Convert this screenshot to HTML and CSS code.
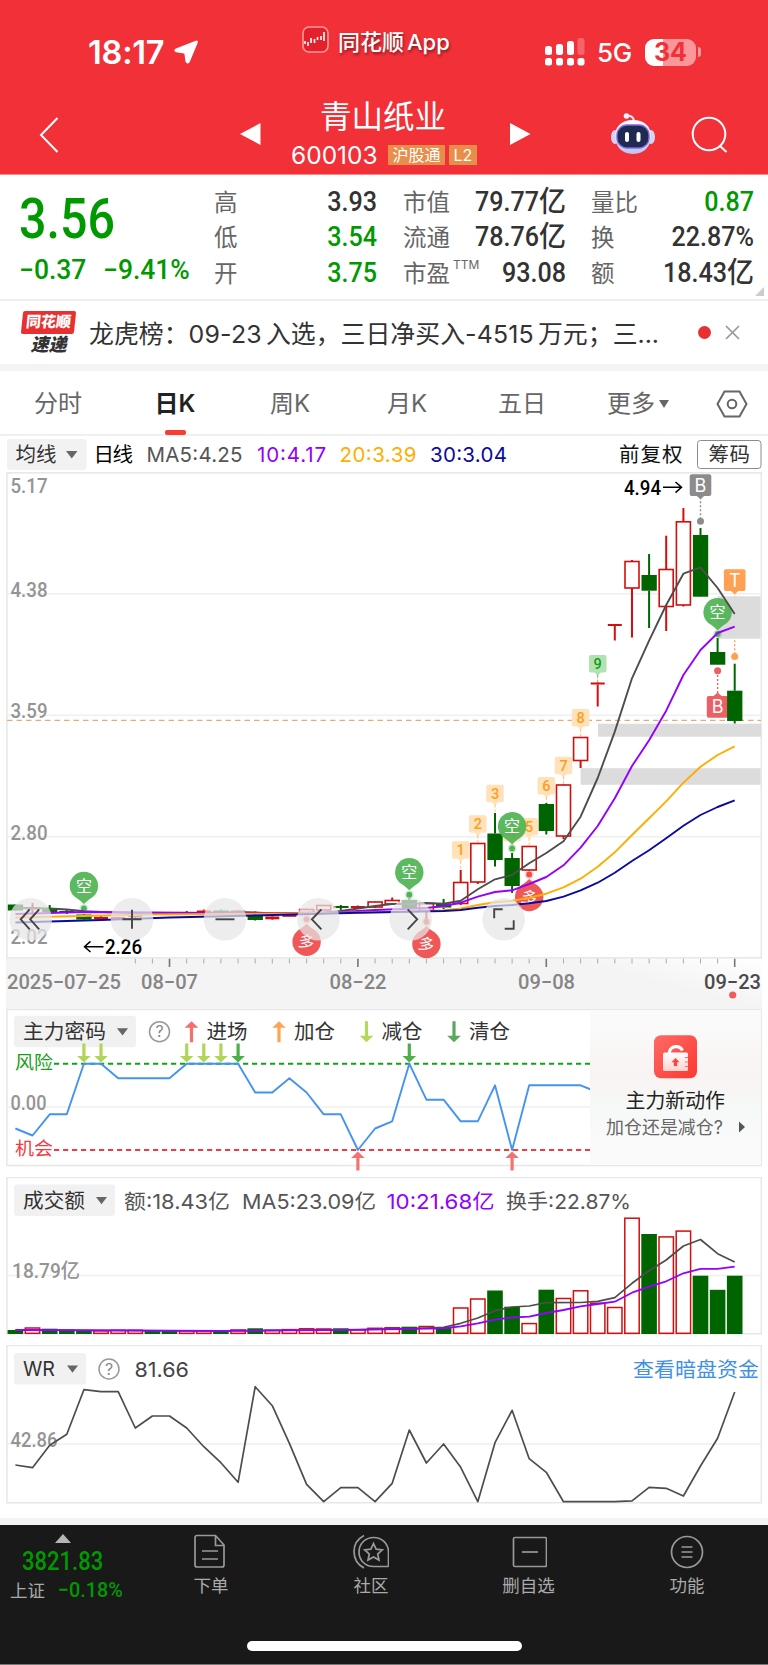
FILE: index.html
```html
<!DOCTYPE html>
<html lang="zh-CN">
<head>
    <meta charset="UTF-8">
    <meta name="viewport" content="width=device-width, initial-scale=1.0">
    <title>青山纸业 600103</title>
    <link rel="stylesheet" href="styles.css">
</head>
<body>
    <header class="header">
        <div class="status">
            <div class="status-left">
                <span class="clock">18:17</span>
                <svg width="26" height="26" viewBox="0 0 26 26"><path d="M23 2.500 Q24.500 1.500 24 3.400 L16 22.600 Q14.600 25 13.200 22.400 L12.200 14.800 Q12 13.800 11 13.700 L3.300 12.600 Q1 11.400 3.200 10.200 Z" fill="#fff" stroke="#fff" stroke-width="1.500" stroke-linejoin="round"/></svg>
            </div>
            <div class="status-app">
                <svg width="27" height="27" viewBox="0 0 27 27">
                    <rect x="1" y="1" width="25" height="25" rx="6" fill="#e3202c" stroke="#ff9a9d" stroke-width="1.600"/>
                    <path d="M3 15v3M6 16v4M9 12v5M12.500 13v4M15.500 11v3M19 10v4M22 6v9" stroke="#fff" stroke-width="1.600"/>
                </svg>
                <span>同花顺<i>App</i></span>
            </div>
            <div class="status-right">
                <svg width="40" height="28" viewBox="0 0 40 28" fill="#fff">
                    <rect x="0" y="8" width="7" height="9" rx="2.500"/><rect x="11" y="6" width="7" height="11" rx="2.500"/><rect x="22" y="3" width="7" height="14" rx="2.500"/><rect x="32.500" y="0" width="7" height="17" rx="2.500" opacity=".25"/>
                    <rect x="0" y="20" width="7" height="7.500" rx="2.500"/><rect x="11" y="20" width="7" height="7.500" rx="2.500"/><rect x="22" y="20" width="7" height="7.500" rx="2.500"/><rect x="32.500" y="20" width="7" height="7.500" rx="2.500"/>
                </svg>
                <span class="net">5G</span>
                <span class="battery">34</span>
                <span class="battery-cap"></span>
            </div>
        </div>
        <div class="titlebar">
            <svg class="back" width="20" height="36" viewBox="0 0 20 36"><path d="M18.500 1 2 18l16.500 17" fill="none" stroke="#fff" stroke-width="2"/></svg>
            <svg class="prev" width="21" height="22" viewBox="0 0 21 22"><path d="M20.500 0v22L0 11z" fill="#fff"/></svg>
            <div class="stock">
                <div class="stock-name">青山纸业</div>
                <div class="stock-code"><span class="code">600103</span><span class="tag">沪股通</span><span class="tag">L2</span></div>
            </div>
            <svg class="next" width="21" height="22" viewBox="0 0 21 22"><path d="M0 0v22L20.500 11z" fill="#fff"/></svg>
            <svg class="robot" width="44" height="42" viewBox="0 0 44 42">
                <defs>
                    <linearGradient id="shell" x1="0" y1="0" x2="0" y2="1"><stop offset="0" stop-color="#fff"/><stop offset="1" stop-color="#bfc4ee"/></linearGradient>
                </defs>
                <path d="M15 3q7-1 8 5" fill="none" stroke="#e6e6fa" stroke-width="2"/>
                <circle cx="15.500" cy="3" r="2.800" fill="#f4f2ff"/>
                <ellipse cx="4" cy="24" rx="4" ry="7" fill="#d5d3f3"/><ellipse cx="40" cy="24" rx="4" ry="7" fill="#d5d3f3"/>
                <path d="M22 7c12 0 18 7 18 16s-6 18-18 18S4 32 4 23 10 7 22 7z" fill="url(#shell)"/>
                <rect x="6" y="12" width="32" height="23" rx="10" fill="#1e2a52" stroke="#7f68df" stroke-width="1.300"/>
                <rect x="14" y="19" width="4" height="10" rx="2" fill="#fff"/><rect x="25.500" y="19" width="4" height="10" rx="2" fill="#fff"/>
            </svg>
            <svg class="search" width="38" height="38" viewBox="0 0 38 38" fill="none" stroke="#fff" stroke-width="2"><circle cx="18" cy="18" r="16.300"/><path d="M28.500 29.500 35.500 36"/></svg>
        </div>
    </header>

    <section class="quote">
        <div class="price">
            <div class="price-now"><span class="din">3.56</span></div>
            <div class="price-change"><span class="din">−0.37</span><span class="din pct">−9.41%</span></div>
        </div>
        <dl class="facts facts-a">
            <dt>高</dt><dd>3.93</dd>
            <dt>低</dt><dd class="down">3.54</dd>
            <dt>开</dt><dd class="down">3.75</dd>
        </dl>
        <dl class="facts facts-b">
            <dt>市值</dt><dd>79.77<i>亿</i></dd>
            <dt>流通</dt><dd>78.76<i>亿</i></dd>
            <dt>市盈<sup>TTM</sup></dt><dd>93.08</dd>
        </dl>
        <dl class="facts facts-c">
            <dt>量比</dt><dd class="down">0.87</dd>
            <dt>换</dt><dd>22.87%</dd>
            <dt>额</dt><dd>18.43<i>亿</i></dd>
        </dl>
        <span class="corner"></span>
    </section>

    <section class="news">
        <div class="news-logo"><b>同花顺</b><em>速递</em></div>
        <p>龙虎榜：<span>09-23</span>入选，三日净买入<span>-4515</span>万元；三...</p>
        <i class="dot"></i>
        <svg width="15" height="15" viewBox="0 0 15 15"><path d="M1 1l13 13M14 1 1 14" stroke="#999" stroke-width="1.700"/></svg>
    </section>

    <nav class="tabs">
        <a>分时</a>
        <a class="active">日K</a>
        <a>周K</a>
        <a>月K</a>
        <a>五日</a>
        <a class="more">更多<i></i></a>
        <svg width="32" height="28" viewBox="0 0 32 28" fill="none" stroke="#666" stroke-width="2"><path d="M8.500 1.500h15L30.500 14l-7 12.500h-15L1.500 14z"/><circle cx="16" cy="14" r="4.300"/></svg>
    </nav>

    <section class="tools">
        <svg width="768" height="36" viewBox="0 436 768 36">
            <rect x="7" y="439" width="79.500" height="31" rx="3" fill="#f2f2f2"/>
            <g class="lg">
                <text x="15.500" y="462" textLength="41" fill="#333">均线</text>
                <path d="M66 451h11.500l-5.750 7.500z" fill="#666"/>
                <text x="93.500" y="462" textLength="39.500" fill="#000">日线</text>
                <text x="146.500" y="461.500" textLength="96" fill="#555">MA5:4.25</text>
                <text x="257" y="461.500" textLength="69" fill="#9400ff">10:4.17</text>
                <text x="339.500" y="461.500" textLength="77" fill="#ffae00">20:3.39</text>
                <text x="430" y="461.500" textLength="77" fill="#0a0aa0">30:3.04</text>
                <text x="619" y="462" textLength="63.500" fill="#111">前复权</text>
                <rect x="697.500" y="440.500" width="63.500" height="28" rx="3" fill="#fff" stroke="#8c8c8c"/>
                <text x="708.500" y="462" textLength="41.500" fill="#333">筹码</text>
            </g>
        </svg>
    </section>

    <main class="charts">
        <svg id="kline" width="768" height="537" viewBox="0 472 768 537"></svg>
        <svg id="signal" width="768" height="168" viewBox="0 1009 768 168"></svg>
        <svg id="volume" width="768" height="168" viewBox="0 1177 768 168"></svg>
        <svg id="wr" width="768" height="173" viewBox="0 1345 768 173"></svg>
    </main>

    <footer class="bottom">
        <div class="bottom-row">
            <div class="index">
                <i></i>
                <div class="index-value"><span class="din">3821.83</span></div>
                <div class="index-sub"><span>上证</span><span class="din">−0.18%</span></div>
            </div>
            <a class="item"><svg width="36" height="36" viewBox="0 0 36 36"><path d="M4 2.500h18.500l8.500 9.500v20a2 2 0 0 1-2 2h-25a2 2 0 0 1-2-2v-27.500a2 2 0 0 1 2-2zM22.500 3v9.500H31M9 18h16M9 26h16"/></svg>下单</a>
            <a class="item"><svg width="36" height="36" viewBox="0 0 36 36"><path d="M20.500 4.500c8.500 0 15 6 15 14.500v13.500a1 1 0 0 1-1 1H20.500C12 33.500 6 27 6 19S12 4.500 20.500 4.500zM11 2.500C4.500 6 1 12 1 18.500S4.500 31.500 11 35M20.500 10.500l2.600 5.600 6.200.7-4.600 4.200 1.300 6.100-5.500-3.100-5.500 3.100 1.300-6.100-4.600-4.200 6.200-.7z"/></svg>社区</a>
            <a class="item"><svg width="36" height="36" viewBox="0 0 36 36"><rect x="2.500" y="4.500" width="33" height="29" rx="1.500"/><path d="M11 19h16"/></svg>删自选</a>
            <a class="item"><svg width="36" height="36" viewBox="0 0 36 36"><circle cx="18" cy="19" r="15.500"/><path d="M12.500 14h11M12.500 19h11M12.500 24h11"/></svg>功能</a>
        </div>
        <div class="home-bar"></div>
    </footer>

    <script src="charts.js"></script>
</body>
</html>
```
FILE: styles.css
```css
* {
    box-sizing: border-box;
}

body {
    margin: 0;
    width: 768px;
    background: #fff;
    color: #333;
    font-family: Inter, 'Noto Sans CJK SC', sans-serif;
}

svg {
    display: block;
    flex: none;
}

.din {
    display: inline-block;
    font-family: Roboto, 'Noto Sans CJK SC', sans-serif;
    font-weight: 500;
    transform: scaleX(.88);
    transform-origin: left center;
}

.header {
    height: 175px;
    background: #f23038;
    color: #fff;
    border-bottom: 1px solid #f8898d;
}

.status {
    display: grid;
    grid-template-columns: 302px 1fr 223px;
    height: 84px;
}

.status-left {
    display: flex;
    align-items: center;
    gap: 8px;
    padding: 20px 0 0 88px;
}

.clock {
    width: 77px;
    font-size: 32.500px;
    font-weight: 600;
    letter-spacing: -.2px;
    white-space: nowrap;
}

.status-app {
    display: flex;
    align-items: center;
    gap: 9px;
    height: 79px;
    font-size: 22px;
    font-weight: 500;
    text-shadow: 1px 2px 3px rgba(0, 0, 0, .45);
}

.status-app i {
    font-style: normal;
    margin-left: 3px;
}

.status-right {
    display: flex;
    align-items: center;
    padding-top: 20px;
}

.net {
    width: 48px;
    padding-left: 12px;
    font-size: 26px;
    font-weight: 500;
    letter-spacing: -.2px;
}

.battery {
    width: 51px;
    height: 27px;
    margin-left: 12px;
    border-radius: 9px;
    background: linear-gradient(90deg, #fff 35%, #f9979b 35%);
    color: #f23038;
    font-size: 25px;
    font-weight: 700;
    line-height: 27px;
    text-align: center;
}

.battery-cap {
    width: 3px;
    height: 10px;
    margin-left: 2px;
    border-radius: 0 4px 4px 0;
    background: #f9979b;
}

.titlebar {
    display: flex;
    height: 89px;
}

.back {
    margin: 33px 0 0 39px;
}

.prev {
    margin: 39px 0 0 181px;
}

.stock {
    width: 250px;
    text-align: center;
}

.stock-name {
    height: 55px;
    padding: 10px 6px 0 0;
    font-size: 31.500px;
    line-height: 46px;
}

.stock-code {
    display: flex;
    align-items: center;
    margin-left: 30px;
    height: 32px;
}

.code {
    width: 97px;
    font-size: 24.500px;
    text-align: left;
}

.tag {
    height: 20px;
    margin-right: 4px;
    padding: 0 4.500px;
    background: #e68e4a;
    font-size: 16px;
    line-height: 20px;
}

.next {
    margin: 39px 0 0 -1px;
}

.robot {
    margin: 29px 0 0 80px;
}

.search {
    margin: 32px 0 0 36px;
}

.quote {
    position: relative;
    display: flex;
    height: 126px;
    border-bottom: 2px solid #efefef;
}

.price {
    width: 214px;
    padding-left: 19px;
    color: #090;
    white-space: nowrap;
}

.price-now {
    margin-top: 10px;
    font-size: 55px;
    line-height: 66px;
}

.price-change {
    margin-top: 2px;
    font-size: 27px;
    line-height: 32px;
}

.price-change .din {
    transform: scaleX(.98);
}

.pct {
    margin-left: 15px;
}

.facts {
    display: grid;
    grid-template-columns: 50px 1fr;
    grid-auto-rows: 35.500px;
    align-items: center;
    margin: 0;
    padding-top: 9px;
    height: 118px;
    font-size: 23.500px;
}

.facts-a {
    width: 163px;
}

.facts-b {
    width: 163px;
    margin-left: 26px;
}

.facts-c {
    width: 163px;
    margin-left: 25px;
}

.facts dt {
    padding-bottom: 2px;
    color: #666;
    white-space: nowrap;
}

.facts dd {
    display: flex;
    justify-content: flex-end;
    align-items: center;
    margin: 0;
    font-family: Roboto, 'Noto Sans CJK SC', sans-serif;
    font-size: 27px;
    font-weight: 500;
    line-height: 32px;
    white-space: nowrap;
    transform: scaleX(.93);
    transform-origin: right center;
}

.facts dd i {
    font-size: 29px;
    font-style: normal;
}

.facts sup {
    margin-left: 3px;
    font-size: 12px;
    line-height: 0;
    vertical-align: 13px;
}

.facts .down {
    color: #090;
}

.corner {
    position: absolute;
    right: 4px;
    bottom: 3px;
    border-left: 9px solid transparent;
    border-bottom: 9px solid #ccc;
}

.news {
    display: flex;
    align-items: center;
    height: 70px;
    padding: 0 28px 0 22px;
    border-bottom: 7px solid #f4f4f4;
}

.news-logo {
    width: 53px;
    height: 44px;
    text-align: center;
    font-weight: 900;
}

.news-logo b {
    display: block;
    height: 23px;
    border-radius: 2px;
    background: #e93030;
    color: #fff;
    font-size: 15px;
    line-height: 22px;
    transform: skewX(-6deg);
}

.news-logo em {
    display: block;
    font-size: 18px;
    line-height: 21px;
}

.news p {
    width: 569px;
    margin: 0 40px 2px 14px;
    font-size: 24.900px;
    white-space: nowrap;
}

.news span {
    margin-right: 4px;
    letter-spacing: .2px;
}

.dot {
    flex: none;
    width: 13px;
    height: 13px;
    margin-right: 14px;
    border-radius: 50%;
    background: #e93030;
}

.tabs {
    display: grid;
    grid-template-columns: 116px 118px 112px 122px 108px 124px 68px;
    align-items: center;
    height: 65px;
    border-bottom: 2px solid #f0f0f0;
    color: #666;
    font-size: 24px;
    text-align: center;
}

.tabs a {
    height: 65px;
    line-height: 66px;
}

.tabs .active {
    color: #222;
    font-weight: 600;
}

.tabs .active::after {
    content: '';
    display: block;
    width: 21px;
    height: 5px;
    margin: -7px auto 0;
    border-radius: 2px;
    background: #fb3b30;
}

.more i {
    display: inline-block;
    margin: 0 0 4px 4px;
    border: 5.500px solid transparent;
    border-top: 8px solid #666;
    border-bottom: 0;
}

.tabs svg {
    margin-left: 16px;
}

/* chart text */
.lg {
    font-size: 20.500px;
}

.num {
    font-family: Roboto, 'Noto Sans CJK SC', sans-serif;
    font-size: 20px;
}

.bottom {
    height: 147px;
    border-top: 7px solid #f3f3f3;
    border-bottom: 1px solid #777;
    background: #191919;
    color: #aaa;
}

.bottom-row {
    display: grid;
    grid-template-columns: 133px 156px 164px 151px 166px;
    height: 116px;
}

.index {
    padding: 9px 0 0 10px;
    font-size: 17.500px;
}

.index i {
    display: block;
    width: 0;
    margin-left: 45px;
    border: 8px solid transparent;
    border-bottom: 9px solid #b5b5b5;
    border-top: 0;
}

.index .din {
    color: #090;
}

.index-value {
    margin-left: 12px;
    font-size: 25px;
    line-height: 36px;
}

.index-sub {
    display: flex;
    gap: 13px;
    align-items: center;
    height: 19px;
    white-space: nowrap;
}

.index-sub .din {
    font-size: 21px;
    transform: scaleX(.94);
}

.item {
    display: flex;
    flex-direction: column;
    align-items: center;
    padding-top: 8px;
    font-size: 17.500px;
    line-height: 34px;
}

.item svg {
    fill: none;
    stroke: #999;
    stroke-width: 1.700;
}

.home-bar {
    width: 275px;
    height: 10px;
    margin-left: 246.500px;
    border-radius: 5px;
    background: #fff;
}
```
FILE: charts.js
```js
const RED = '#d40d0d', GREEN = '#006400', GREY = '#4d4d4d', PURPLE = '#9400ff';
const px = k => +(15.4 + 17.127 * k).toFixed(1);

// helpers, each one returns an svg string
const line = (x1, y1, x2, y2, c, w = 2, extra = '') =>
    `<path d="M${x1} ${y1}L${x2} ${y2}" stroke="${c}" stroke-width="${w}" fill="none" ${extra}/>`;
const text = (x, y, s, c, len, extra = '') =>
    `<text x="${x}" y="${y}" fill="${c}" ${len ? `textLength="${len}" lengthAdjust="spacingAndGlyphs"` : ''} ${extra}>${s}</text>`;
const poly = (pts, c, w = 1.9) =>
    `<polyline points="${pts.map(p => px(p[0]) + ',' + p[1]).join(' ')}" fill="none" stroke="${c}" stroke-width="${w}" stroke-linejoin="round"/>`;
const series = (ys, from = 0) => ys.map((y, i) => [i + from, y]);
const frame = (y, h) => `<rect x="6.900" y="${y}" width="754.400" height="${h}" fill="#fff" stroke="#e8e8e8" stroke-width="1.600"/>`;
const grid = (y, x2 = 761) => line(7, y, x2, y, '#efefef', 1.5);

// ---------- K line ----------
// [top, bottom, high, low, up]
const candles = [
    [904.5, 910.5, 904, 911, 0], [907.5, 909.5, 903, 915, 1], [908, 912, 905, 912, 0], [911, 912.5, 909, 914, 0],
    [914.5, 919.5, 914, 920, 0], [917, 919, 915.5, 919, 1], [917, 919.5, 917, 920, 1], [915, 917, 914, 918, 1],
    [912, 913.3, 912, 914, 0], [912, 913.5, 912, 914, 0], [912, 913.8, 911, 914, 1], [910.5, 912.8, 909.5, 914, 1],
    [910.5, 912.5, 909.5, 914, 0], [910.5, 912.5, 910, 914, 1], [915, 920, 911.5, 920.5, 0], [916.5, 919.3, 914, 920, 1],
    [915, 916.8, 912, 917, 1], [909.5, 912.5, 908.5, 914, 1], [905.5, 910, 905, 910, 1], [906, 908, 905, 910, 0],
    [906, 908, 905.5, 909, 1], [902, 907, 901.5, 908, 1], [900.5, 904, 897.5, 904, 1], [900, 909, 898, 909, 0],
    [903.5, 910.5, 903, 922, 1], [903.5, 907.5, 899, 909, 0], [882.5, 903.5, 870, 905, 1], [843.5, 882, 843, 884, 1],
    [833.5, 860, 813, 866.5, 0], [858, 886, 853, 893, 0], [846.5, 870, 846, 871, 1], [804, 831, 803, 834.5, 0],
    [785, 836, 784.5, 839, 1], [737.5, 760.5, 737, 768, 1], [682.5, 684.5, 682, 706.5, 1], [624, 626, 624, 640.5, 1],
    [561.5, 588, 560, 637.5, 1], [575, 590.7, 554, 628, 0], [569.5, 606.5, 535.7, 631, 1], [521.8, 605, 508, 606.5, 1],
    [535, 596.7, 528, 597, 0], [652, 664.7, 638, 665, 0], [690.7, 721, 663.7, 723.5, 0]
];

function candle(c, k) {
    const x = px(k), [t, b, hi, lo, up] = c;
    const col = up ? RED : GREEN;
    let s = line(x, hi, x, t, col) + line(x, b, x, lo, col);
    if (!up) return s + `<rect x="${x - 7.6}" y="${t}" width="15.300" height="${b - t}" fill="${col}"/>`;
    if (b - t < 2.9) return s + `<rect x="${x - 7}" y="${t}" width="14" height="${b - t}" fill="${col}"/>`;
    return s + `<rect x="${x - 7}" y="${t}" width="14" height="${b - t}" fill="#fff" stroke="${col}" stroke-width="1.600"/>`;
}

function pin(k, cy, dotY, word, col) {
    const x = px(k), d = dotY > cy ? 1 : -1;
    return `<g opacity=".93"><circle cx="${x}" cy="${cy}" r="14.200" fill="${col}"/>
        <path d="M${x - 8} ${cy + d * 11}L${x} ${cy + d * 18}L${x + 8} ${cy + d * 11}z" fill="${col}"/></g>
        <circle cx="${x}" cy="${dotY}" r="4.500" fill="${col}" opacity=".25"/><circle cx="${x}" cy="${dotY}" r="2.900" fill="${col}"/>` +
        text(x, cy + 6, word, '#fff', 0, `font-size="16" text-anchor="middle" ${d < 0 ? `transform="rotate(14 ${x} ${cy})"` : ''}`);
}

function count(n, k, y, stemTo) {
    const x = px(k), bg = n === 9 ? '#b4e1b4' : '#ffe2ba', fg = n === 9 ? '#0f9d0f' : '#ff9d1e';
    return `<rect x="${x - 8.8}" y="${y}" width="17.600" height="17.500" rx="2" fill="${bg}"/>
        <path d="M${x - 3.5} ${y + 17}h7l-3.500 4z" fill="${bg}"/>` +
        line(x, y + 20, x, stemTo, fg, 1, 'stroke-dasharray="3 1.500" opacity=".6"') +
        text(x, y + 13.8, n, fg, 0, 'class="num" style="font-size:14.500px" font-weight="500" text-anchor="middle"');
}

function flag(letter, k, y, col, dotY) {
    const x = px(k), up = dotY < y;
    return line(x, up ? y - 3 : y + 23, x, dotY, col, 1.4, 'stroke-dasharray="2 2"') +
        `<rect x="${x - 10.8}" y="${y}" width="21.600" height="21.800" rx="2" fill="${col}"/>
        <path d="M${x - 4} ${up ? y : y + 21.5}h8l-4 ${up ? -3.5 : 3.5}z" fill="${col}"/>
        <circle cx="${x}" cy="${dotY}" r="3.500" fill="${col}"/>` +
        text(x, y + 17.3, letter, '#fff', 0, 'font-size="18" text-anchor="middle"');
}

const ma5 = series([908, 908, 908.5, 909.5, 911.3, 912, 912.5, 913, 914, 914, 913.5, 913, 912.5, 912, 912.5, 913.5, 914, 914, 913, 911,
    908.5, 906, 904, 904, 903, 903.7, 900.7, 889.3, 879.3, 875, 863.3, 853, 841.3, 816.7, 778, 731.6, 678.3, 640.7, 605, 573.7, 567.3, 588, 614]);
const ma10 = [[0, 914], [4, 912], [12, 913], [17, 913], [19, 912], [21, 910], [23, 908.7], [24, 908], [25, 906], [26, 902.7], [27, 896.7], [28, 892],
    [29, 890.3], [30, 884], [31, 877], [32, 865.3], [33, 847.7], [34, 826], [35, 798.3], [36, 766], [37, 740.3], [38, 710.7], [39, 675], [40, 650], [41, 633], [42, 626.7]];
const ma20 = [[0, 917.5], [8, 914.5], [16, 913.5], [22, 912], [25, 910.3], [26, 908.5], [27, 905], [28, 902.3], [29, 900.7], [30, 897.7], [31, 893.7],
    [32, 887.3], [33, 878.7], [34, 866.7], [35, 852.3], [36, 835], [37, 818.3], [38, 801.3], [39, 782.7], [40, 766.7], [41, 755], [42, 746.3]];
const ma30 = [[0, 922.5], [5, 920], [9, 917.5], [14, 915.5], [20, 912.8], [23, 911.8], [25, 911], [26, 910], [27, 907.7], [28, 906], [29, 905], [30, 903.3],
    [31, 901], [32, 896.7], [33, 890.3], [34, 882.7], [35, 872.7], [36, 861], [37, 850.3], [38, 838.3], [39, 825.7], [40, 815], [41, 807], [42, 800.3]];

function drawKline() {
    let s = `<defs>
        <linearGradient id="axisFade" x1="0" y1="1" x2="1" y2="0"><stop offset=".5" stop-color="#f4f4f4"/><stop offset="1" stop-color="#fff"/></linearGradient>
        </defs>
        <rect x="6" y="958" width="756" height="51" fill="#f4f4f4"/><rect x="562" y="958" width="200" height="51" fill="url(#axisFade)"/>`;
    s += frame(472.8, 485);
    [593.7, 715.3, 836.7].forEach(y => s += grid(y));
    s += '<g fill="#dcdcdc"><rect x="598" y="723.700" width="163" height="13"/><rect x="580.600" y="768.200" width="180" height="16.600"/></g>';
    s += line(7, 720.4, 761, 720.4, '#dfae74', 1.2, 'stroke-dasharray="5.500 4"');

    [['5.17', 492.8], ['4.38', 596.5], ['3.59', 718], ['2.80', 839.5], ['2.02', 943.5]].forEach(l =>
        s += text(10.5, l[1], l[0], '#949494', 37, 'class="num" font-weight="500"'));

    s += count(1, 26, 841.3, 870) + count(2, 27, 815.3, 843) + count(3, 28, 784.7, 813) + count(4, 29, 824, 853) + count(5, 30, 818, 846) +
        count(6, 31, 777, 803) + count(7, 32, 756.7, 784) + count(8, 33, 709, 737) + count(9, 34, 655, 682);
    s += flag('B', 40, 474.2, '#8c8c8c', 521.3) + flag('B', 41, 696, '#ee5f63', 670.8) + flag('T', 42, 569.2, '#ffa052', 656.5);
    // gap zone hides the middle of the T flag's stem
    s += '<rect x="717.600" y="596.300" width="43" height="42.400" fill="#dcdcdc"/>';
    s += candles.map(candle).join('');
    s += pin(4, 886, 908.5, '空', '#50b454') + pin(23, 872.3, 894.7, '空', '#50b454') + pin(29, 826.3, 848.5, '空', '#50b454') + pin(41, 612.3, 634, '空', '#50b454');
    s += pin(17, 941.7, 919.3, '多', '#ef4b4b') + pin(24, 944, 921.7, '多', '#ef4b4b') + pin(30, 897, 874.5, '多', '#ef4b4b');
    s += poly(ma5, GREY) + poly(ma10, PURPLE) + poly(ma20, '#ffae00') + poly(ma30, '#0a0aa0');

    s += text(624, 494.5, '4.94', '#000', 37, 'class="num" font-weight="500"') + '<path d="M663 487.300h18M675.500 482l6 5.300-6 5.300" fill="none" stroke="#000" stroke-width="1.500"/>';
    s += text(105, 954, '2.26', '#000', 37, 'class="num" font-weight="500"') + '<path d="M103.500 946.700h-18M90.500 941.400l-6 5.300 6 5.300" fill="none" stroke="#000" stroke-width="1.500"/>';

    // floating chart controls
    const icons = [
        [30.7, 'M-1 -10L-10 0L-1 10M8.500 -10L-.5 0L8.500 10'],
        [132, 'M-9.500 0H9.500M0 -9.500V9.500'],
        [225, 'M-9.500 0H9.500'],
        [318.4, 'M3 -10L-6.500 0L3 10'],
        [410.7, 'M-3 -10L6.500 0L-3 10'],
        [503.7, 'M-9.500 -1V-10H-1M10 1V9.500H1']
    ];
    icons.forEach(([x, d]) => s += `<g transform="translate(${x} 919.300)"><circle r="21.300" fill="#e6e6e6" opacity=".72"/><path d="${d}" fill="none" stroke="#444" stroke-width="1.900"/></g>`);

    for (let k = 7; k < 43; k++) {
        const big = (k - 9) % 11 === 0;
        s += line(px(k), 958.7, px(k), big ? 967 : 963.5, big ? '#777' : '#aaa', big ? 1.6 : 1);
    }
    s += text(7, 989, '2025−07−25', '#858585', 114, 'class="num" font-weight="500"');
    [['08−07', 141, '#858585'], ['08−22', 329.5, '#858585'], ['09−08', 518, '#858585'], ['09−23', 704, '#4a4a4a']].forEach(d =>
        s += text(d[1], 989, d[0], d[2], 57, 'class="num" font-weight="500"'));
    s += '<circle cx="732.700" cy="995" r="3.600" fill="#f25b5b"/>';
    document.getElementById('kline').innerHTML = s;
}

const chip = (y, w, label, len) => `<rect x="14" y="${y}" width="${w}" height="31.500" rx="3" fill="#f1f1f1"/>` +
    text(23, y + 23, label, '#333', len) + `<path d="M${w - 5} ${y + 12.500}h11l-5.500 7.300z" fill="#666"/>`;
const help = (x, y) => `<circle cx="${x}" cy="${y}" r="10" fill="none" stroke="#999" stroke-width="1.500"/>` +
    text(x, y + 5.7, '?', '#888', 0, 'font-size="16" text-anchor="middle"');
const arrow = (x, y, h, col, up) => up
    ? `<path d="M${x - 6.8} ${y + 6.5}L${x} ${y}l6.800 6.500h-5.200v${h - 6.5}h-3.200v-${h - 6.5}z" fill="${col}"/>`
    : `<path d="M${x - 6.8} ${y + h - 6.5}L${x} ${y + h}l6.800 -6.500h-5.200v-${h - 6.5}h-3.200v${h - 6.5}z" fill="${col}"/>`;

// ---------- main force signal ----------
function drawSignal() {
    const hi = 1063.7, lo = 1150, a = 1078.3, b = 1114.3, c = 1092.5, d = 1121.3, e = 1085.3;
    const pts = series([1128.5, 1135.5, b, b, hi, hi, a, a, a, a, hi, hi, hi, hi, c, c, a, c, b, b, lo, 1128.5, d, hi, 1099.7, 1099.7, d, d, e, lo, e, e, e, e]);
    pts.push([33.6, 1089.5]);
    let s = frame(1009.5, 156) + grid(1107, 590) + '<g class="lg">' + chip(1015.7, 122, '主力密码', 83);
    s += help(159.5, 1031.7);
    [[191.5, '#f56e6c', 1, '进场'], [279, '#ffa452', 1, '加仓'], [366.5, '#b4d85c', 0, '减仓'], [454, '#5aa860', 0, '清仓']].forEach(l =>
        s += arrow(l[0], 1021.3, 21, l[1], l[2]) + text(l[0] + 15, 1038.7, l[3], '#333', 41));
    s += '</g>';
    s += line(54, hi, 590, hi, '#16a016', 2, 'stroke-dasharray="5.200 3.800"') + line(54, lo, 590, lo, '#f23a40', 2, 'stroke-dasharray="5.200 3.800"');
    s += text(15, 1068.5, '风险', '#16a016', 38, 'font-size="18.500"') + text(15, 1154.500, '机会', '#f23a40', 38, 'font-size="18.500"');
    s += text(10.5, 1109.7, '0.00', '#949494', 36, 'class="num" font-weight="500"');
    s += poly(pts, '#4593f0');
    [4, 5, 10, 11, 12].forEach(k => s += arrow(px(k), 1043.5, 19, '#b1d657', 0));
    [13, 23].forEach(k => s += arrow(px(k), 1043.5, 19, '#4bb047', 0));
    [20, 29].forEach(k => s += arrow(px(k), 1151.5, 19, '#f37370', 1));

    // locked card
    s += `<defs><linearGradient id="card" x1="0" y1="0" x2="0" y2="1"><stop offset=".1" stop-color="#fafafa"/><stop offset=".4" stop-color="#faf3f3"/><stop offset=".65" stop-color="#f5f9f7"/><stop offset=".85" stop-color="#fafafa"/></linearGradient>
        <linearGradient id="lock" x1="0" y1="0" x2="1" y2="1"><stop offset="0" stop-color="#ff6a66"/><stop offset="1" stop-color="#fb3830"/></linearGradient>
        <linearGradient id="body" x1="0" y1="0" x2="0" y2="1"><stop offset="0" stop-color="#fff"/><stop offset="1" stop-color="#ffd2d0"/></linearGradient></defs>
        <rect x="590" y="1010" width="171" height="155" fill="url(#card)"/>
        <rect x="654" y="1035.300" width="43" height="43" rx="7" fill="url(#lock)"/>
        <path d="M669.500 1053v-1.500a7 7 0 0 1 13-1" fill="none" stroke="#fff" stroke-width="3.200"/>
        <rect x="663" y="1052.500" width="25" height="18.500" rx="1.500" fill="url(#body)"/>
        <path d="M675.500 1058l4 4.200h-2.300v3.800h-3.400v-3.800H671.500z" fill="#fb4640"/>
        <path d="M685 1057.500h3M685 1062h3M685 1066.500h3" stroke="#fb6b66" stroke-width="1"/>`;
    s += text(625.5, 1107.5, '主力新动作', '#222', 99.5, 'font-size="20"') + text(606, 1134, '加仓还是减仓?', '#666', 117, 'font-size="18"');
    s += '<path d="M739 1121.500l6 5.500-6 5.500z" fill="#555"/>';
    document.getElementById('signal').innerHTML = s;
}

// ---------- turnover ----------
function drawVolume() {
    const tops = [1330, 1327.7, 1328.7, 1329.5, 1330, 1330.5, 1330, 1330, 1330.5, 1330.5, 1330.5, 1330.5, 1330.5, 1329.7, 1328.3, 1330, 1329.3, 1328.5, 1328.7, 1328.3,
        1329.5, 1328, 1327.5, 1326.7, 1326.2, 1327, 1307.7, 1298.7, 1290.5, 1306.7, 1323.3, 1289.7, 1298.2, 1290.5, 1303, 1307.2, 1217.9, 1234, 1236.6, 1230.8, 1275.7, 1289.8, 1275.7];
    const green = [0, 2, 3, 4, 8, 9, 12, 14, 19, 23, 25, 28, 29, 31, 37, 40, 41, 42];
    let s = frame(1177.4, 156.3) + grid(1275.5);
    s += text(12, 1278, '18.79亿', '#949494', 68, 'class="num" font-weight="500"');
    tops.forEach((y, k) => {
        s += green.includes(k)
            ? `<rect x="${px(k) - 7.8}" y="${y}" width="15.600" height="${1334 - y}" fill="${GREEN}"/>`
            : `<rect x="${px(k) - 7.2}" y="${y + .3}" width="14.400" height="${1333 - y}" fill="#fff" stroke="${RED}" stroke-width="1.500"/>`;
    });
    s += poly([[0, 1330], [12, 1331], [20, 1329.5], [24, 1328], [25, 1327.3], [26, 1323.3], [27, 1318], [28, 1310.7], [29, 1307], [30, 1306], [31, 1302.7], [33, 1302.5], [34, 1301.3],
        [35, 1297.7], [36, 1283.3], [37, 1270.7], [38, 1260], [39, 1246], [40, 1239.5], [41, 1253.7], [42, 1262]], GREY, 1.7);
    s += poly([[0, 1330], [12, 1330.8], [20, 1329.8], [25, 1328.3], [26, 1326.3], [27, 1323.3], [28, 1319.7], [29, 1317.5], [30, 1316.7], [31, 1313], [32, 1310], [33, 1306.3], [34, 1304],
        [35, 1301.7], [36, 1292.7], [37, 1286.7], [38, 1281.3], [39, 1273.3], [40, 1268.8], [41, 1268.8], [42, 1266.7]], PURPLE, 1.8);
    s += '<g class="lg">' + chip(1184.5, 101, '成交额', 62) + text(124, 1208.5, '额:18.43亿', '#555', 106) + text(242, 1208.5, 'MA5:23.09亿', '#555', 134) +
        text(386.5, 1208.5, '10:21.68亿', PURPLE, 108) + text(506, 1208.5, '换手:22.87%', '#555', 125) + '</g>';
    document.getElementById('volume').innerHTML = s;
}

// ---------- WR ----------
function drawWr() {
    const z = 1501.7;
    const ys = [1465, 1467.7, 1445.3, 1434.3, 1389.7, 1391.7, 1391.7, 1428, 1416, 1416, 1428, 1446.7, 1462.7, 1482.3, 1386.7, 1405.7, 1443.3, 1484.3, z, 1487.7,
        1487.7, z, 1483.3, 1430, 1463, 1444, 1467.3, z, 1442.7, 1410.3, 1458.7, 1472.3, z, z, z, z, 1500.9, 1487.3, 1488.3, 1496, 1466, 1438.3, 1392];
    let s = frame(1345.4, 157.3) + grid(1444);
    s += text(10.5, 1447, '42.86', '#949494', 47, 'class="num" font-weight="500"') + poly(series(ys), GREY, 1.7);
    s += '<g class="lg">' + chip(1353, 72, 'WR', 32) + help(109, 1369) + text(134.5, 1376.5, '81.66', '#444', 54.5) +
        text(633, 1377, '查看暗盘资金', '#4190e8', 126) + '</g>';
    document.getElementById('wr').innerHTML = s;
}

drawKline();
drawSignal();
drawVolume();
drawWr();
```
